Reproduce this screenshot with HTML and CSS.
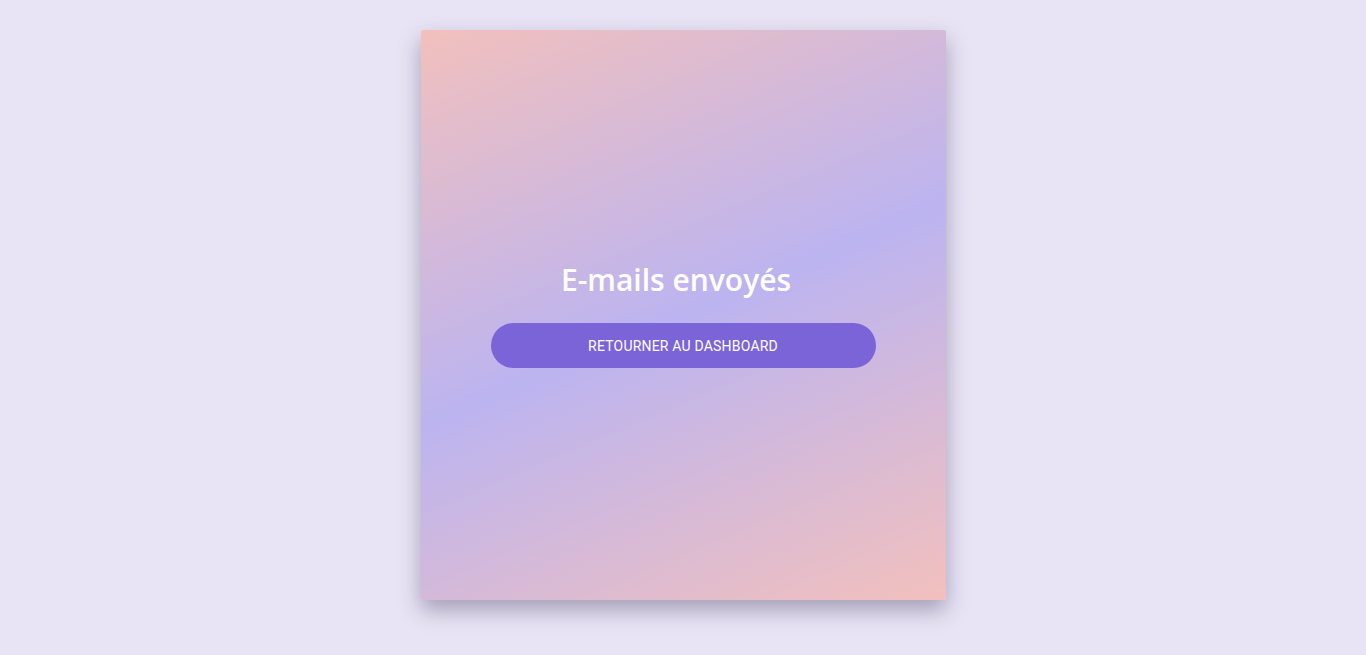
FILE: index.html
```html
<!DOCTYPE html>
<html lang="fr">
<head>
<meta charset="utf-8">
<title>E-mails envoyés</title>
<link rel="stylesheet" href="styles.css">
</head>
<body>
<main class="page">
  <section class="card">
    <h1 class="title">E-mails envoyés</h1>
    <a class="btn" href="#">Retourner au dashboard</a>
  </section>
</main>
</body>
</html>
```

FILE: styles.css
```css
html, body {
  margin: 0;
  padding: 0;
  height: 100%;
}
body {
  background: #e8e4f5;
  font-family: "Open Sans", "Liberation Sans", sans-serif;
}
.page {
  display: flex;
  justify-content: center;
  padding-top: 30px;
}
.card {
  width: 525px;
  height: 570px;
  box-sizing: border-box;
  border-radius: 2px;
  background: linear-gradient(157deg, #f2c0bd 0%, #bcb4f0 50%, #f2c0bd 100%);
  box-shadow: 0 10px 22px rgba(40, 30, 70, 0.35);
  display: flex;
  flex-direction: column;
  align-items: center;
  justify-content: center;
  gap: 23px;
  padding-bottom: 3px;
}
.title {
  margin: 0;
  padding-right: 14px;
  color: #ffffff;
  font-family: "Open Sans", sans-serif;
  font-weight: 600;
  font-size: 30px;
  line-height: 41px;
}
.btn {
  width: 385px;
  height: 45px;
  border-radius: 23px;
  background: #7b63d8;
  color: #ffffff;
  text-decoration: none;
  text-transform: uppercase;
  font-family: Roboto, "Liberation Sans", sans-serif;
  font-size: 14px;
  font-weight: 400;
  letter-spacing: 0.2px;
  display: flex;
  align-items: center;
  justify-content: center;
}
```
